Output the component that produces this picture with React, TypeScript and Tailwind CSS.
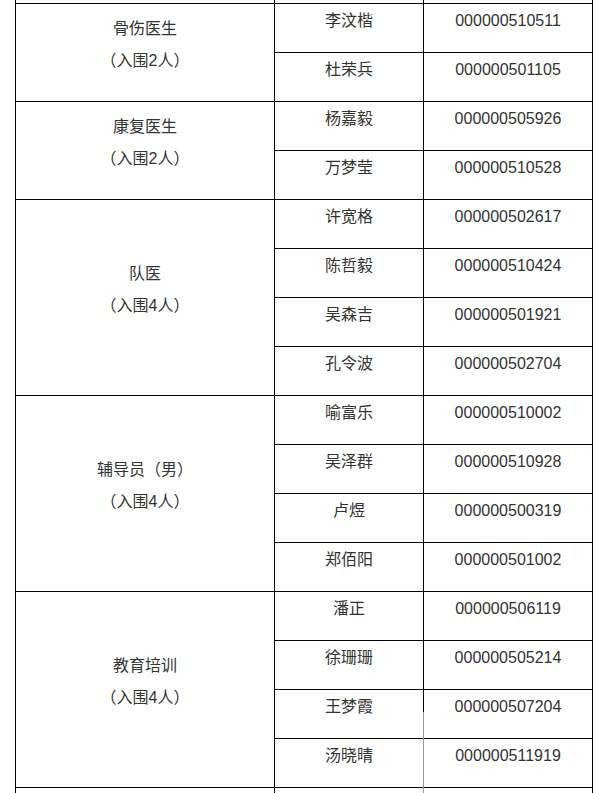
import React from 'react';

type Group = {
  title: string[];
  people: { name: string; id: string }[];
};

const groups: Group[] = [
  {
    title: ['骨伤医生', '（入围2人）'],
    people: [
      { name: '李汶楷', id: '000000510511' },
      { name: '杜荣兵', id: '000000501105' },
    ],
  },
  {
    title: ['康复医生', '（入围2人）'],
    people: [
      { name: '杨嘉毅', id: '000000505926' },
      { name: '万梦莹', id: '000000510528' },
    ],
  },
  {
    title: ['队医', '（入围4人）'],
    people: [
      { name: '许宽格', id: '000000502617' },
      { name: '陈哲毅', id: '000000510424' },
      { name: '吴森吉', id: '000000501921' },
      { name: '孔令波', id: '000000502704' },
    ],
  },
  {
    title: ['辅导员（男）', '（入围4人）'],
    people: [
      { name: '喻富乐', id: '000000510002' },
      { name: '吴泽群', id: '000000510928' },
      { name: '卢煜', id: '000000500319' },
      { name: '郑佰阳', id: '000000501002' },
    ],
  },
  {
    title: ['教育培训', '（入围4人）'],
    people: [
      { name: '潘正', id: '000000506119' },
      { name: '徐珊珊', id: '000000505214' },
      { name: '王梦霞', id: '000000507204' },
      { name: '汤晓晴', id: '000000511919' },
    ],
  },
];

const spans: Record<number, string> = {
  2: 'row-span-2',
  4: 'row-span-4',
};

const cell =
  'border-r border-b border-black flex flex-col items-center justify-center pb-[15px] leading-[32px]';

export default function App() {
  return (
    <div
      className="relative h-[793px] overflow-hidden bg-white text-[16px] text-[#333]"
      style={{ fontFamily: '"Liberation Sans", "Noto Sans CJK SC", sans-serif' }}
    >
      <div className="ml-[15px] w-[578px] border-l border-black grid grid-cols-[259px_149px_169px] grid-rows-[4px] auto-rows-[49px]">
        {/* previous row, cut off */}
        <div className="border-r border-b border-black" />
        <div className="border-r border-b border-black" />
        <div className="border-r border-b border-black" />

        {groups.map((g) => (
          <React.Fragment key={g.title[0]}>
            <div className={`${cell} ${spans[g.people.length]}`}>
              {g.title.map((t) => (
                <div key={t}>{t}</div>
              ))}
            </div>
            {g.people.map((p) => (
              <React.Fragment key={p.id}>
                <div className={`${cell} col-start-2`}>{p.name}</div>
                <div className={`${cell} col-start-3`}>{p.id}</div>
              </React.Fragment>
            ))}
          </React.Fragment>
        ))}

        {/* next row, cut off */}
        <div className="border-r border-black" />
        <div className="border-r border-black" />
        <div className="border-r border-black" />
      </div>

      {/* watermark fading the column line */}
      <div className="absolute left-[423px] top-[712px] h-[81px] w-px bg-[#9a9a9a]" />
    </div>
  );
}
